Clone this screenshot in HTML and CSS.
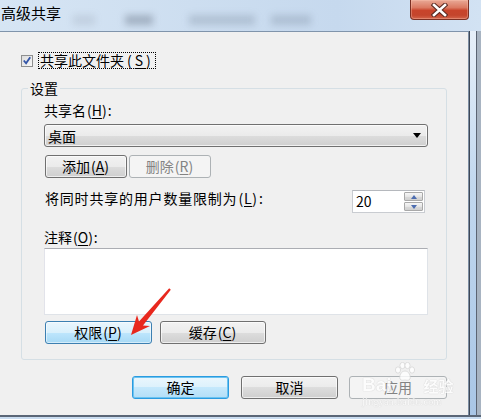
FILE: index.html
```html
<!DOCTYPE html>
<html lang="zh-CN">
<head>
<meta charset="utf-8">
<title>高级共享</title>
<link rel="stylesheet" href="styles.css">
</head>
<body>
<div class="window">
  <div class="titlebar">
    <span class="title">高级共享</span>
    <div class="blur-tabs">
      <span class="bt bt1"></span>
      <span class="bt bt2"></span>
      <span class="bt bt3"></span>
      <span class="bt bt4"></span>
    </div>
    <div class="close">
      <svg width="17" height="14" viewBox="0 0 17 14">
        <path d="M3 2 L14 12 M14 2 L3 12" stroke="#5a2a22" stroke-width="4.6" stroke-linecap="square"/>
        <path d="M3 2 L14 12 M14 2 L3 12" stroke="#ffffff" stroke-width="2.6" stroke-linecap="square"/>
      </svg>
    </div>
  </div>
  <div class="body-row">
    <div class="content">
      <div class="share-row">
        <span class="cb">
          <svg width="13" height="13" viewBox="0 0 13 13">
            <path d="M3 6.5 L5.5 9.5 L10 3" fill="none" stroke="#3355a8" stroke-width="2"/>
          </svg>
        </span>
        <span class="focus">共享此文件夹<span class="mn wide">(<u>S</u>)</span></span>
      </div>
      <fieldset class="group">
        <legend>设置</legend>
        <div class="group-body">
          <div class="lbl">共享名<span class="mn">(<u>H</u>)</span>:</div>
          <div class="combo"><span class="combo-text">桌面</span><span class="caret"></span></div>
          <div class="btn-row">
            <button class="btn w82">添加<span class="mn">(<u>A</u>)</span></button>
            <button class="btn w82 disabled">删除<span class="mn">(<u>R</u>)</span></button>
          </div>
          <div class="limit-row">
            <span class="limit-text">将同时共享的用户数量限制为<span class="mn">(<u>L</u>)</span>:</span>
            <div class="spin">
              <span class="spin-val">20</span>
              <div class="spin-btns">
                <span class="sb"><span class="tri-up"></span></span>
                <span class="sb"><span class="tri-down"></span></span>
              </div>
            </div>
          </div>
          <div class="lbl note-lbl">注释<span class="mn">(<u>O</u>)</span>:</div>
          <div class="textarea"></div>
          <div class="btn-row2">
            <button class="btn w107 hot">权限<span class="mn">(<u>P</u>)</span></button>
            <button class="btn w106">缓存<span class="mn">(<u>C</u>)</span></button>
          </div>
        </div>
      </fieldset>
      <div class="footer">
        <button class="btn w97 ok">确定</button>
        <button class="btn w97">取消</button>
        <button class="btn w98 disabled">应用</button>
      </div>
    </div>
    <div class="frame-right"></div>
  </div>
  <div class="frame-bottom"></div>
</div>
<svg class="red-arrow" width="481" height="419" viewBox="0 0 481 419">
  <polygon points="131,335 137,315 139,321.5 169.2,288.3 170.8,289.7 143,325.5 150,326" fill="#e8281e"/>
</svg>
<div class="watermark">
  <div class="wm-top">
    <span class="wm-bai">Bai</span>
    <svg class="paw" width="22" height="20" viewBox="0 0 22 20">
      <g fill="#ffffff" stroke="#cfcfcf" stroke-width="0.8">
        <ellipse cx="4" cy="8" rx="2.6" ry="3.2"/>
        <ellipse cx="8.5" cy="3.5" rx="2.6" ry="3.2"/>
        <ellipse cx="13.5" cy="3.5" rx="2.6" ry="3.2"/>
        <ellipse cx="18" cy="8" rx="2.6" ry="3.2"/>
        <path d="M11 9 C15 9 17 14 16 17 C15 19 12 18 11 18 C10 18 7 19 6 17 C5 14 7 9 11 9 Z"/>
      </g>
    </svg>
    <span class="wm-jy">经验</span>
  </div>
  <div class="wm-url">jingyan.baidu.com</div>
</div>
</body>
</html>
```
FILE: styles.css
```css
* { box-sizing: border-box; }
html, body { margin: 0; padding: 0; }
body {
  width: 481px;
  height: 419px;
  overflow: hidden;
  position: relative;
  font-family: "Noto Sans CJK SC", "Noto Sans", sans-serif;
  font-size: 14px;
  color: #000;
  background: #c6daef;
}
.window { display: flex; flex-direction: column; height: 419px; }

/* title bar */
.titlebar {
  height: 31px;
  flex: none;
  display: flex;
  align-items: flex-start;
  background: linear-gradient(to right, #d6e5f4 0%, #cddef0 40%, #c6d9ee 70%, #d2e2f3 100%);
  overflow: hidden;
}
.title {
  font-size: 15px;
  line-height: 16px;
  margin: 5px 0 0 1px;
  color: #000;
  position: relative;
  z-index: 1;
}
.blur-tabs {
  display: flex;
  align-items: center;
  height: 31px;
  margin-left: 8px;
  filter: blur(3.5px);
}
.bt { display: block; height: 10px; background: rgba(80, 95, 120, 0.22); margin-top: 8px; }
.bt1 { width: 22px; margin-left: 4px; background: rgba(90, 100, 120, 0.14); }
.bt2 { width: 28px; margin-left: 30px; background: rgba(60, 70, 90, 0.3); }
.bt3 { width: 66px; margin-left: 36px; }
.bt4 { width: 40px; margin-left: 16px; }
.close {
  margin-left: auto;
  margin-right: 12px;
  width: 59px;
  height: 20px;
  border: 1px solid #7b3023;
  border-top: none;
  border-radius: 0 0 4px 4px;
  background: linear-gradient(#e9a996 0%, #db7a62 40%, #c8442b 55%, #c4452c 80%, #d3654b 100%);
  display: flex;
  align-items: center;
  justify-content: center;
  box-shadow: inset 0 0 0 1px rgba(255, 200, 180, 0.35);
}

/* body */
.body-row { display: flex; height: 384px; flex: none; }
.content {
  width: 469px;
  height: 384px;
  background: #f0f0f0;
  border-top: 1px solid #8094ab;
  border-right: 1px solid #7d8ea3;
  display: flex;
  flex-direction: column;
}
.frame-right {
  flex: 1;
  background:
    linear-gradient(to right, #3e4857 0 1px, transparent 1px 7px, #5b6473 7px 8px, #a8b4c2 8px),
    linear-gradient(#e7f0fa, #c2d8ef 40%, #a9c6e6);
}
.frame-bottom {
  height: 4px;
  flex: none;
  border-top: 2px solid #5a6676;
  background: #c9dcf0;
}

/* share row */
.share-row {
  display: flex;
  align-items: center;
  height: 17px;
  margin-top: 20px;
  padding-left: 21px;
}
.cb {
  width: 12px;
  height: 12px;
  border: 1px solid #8e8f8f;
  background: linear-gradient(135deg, #dcdcdc, #f8f8f8);
  display: flex;
  align-items: center;
  justify-content: center;
  margin-right: 6px;
}
.cb svg { display: block; margin: -1px; }
.focus {
  outline: 1px dotted #000;
  outline-offset: 0;
  line-height: 15px;
  padding: 0 1px;
}
.mn { letter-spacing: 0; padding: 0 1px; }
.mn.wide { letter-spacing: 3px; padding: 0 0 0 3px; }
.mn u { text-underline-offset: 2px; }

/* group box */
.group {
  margin: 11px 21px 0 21px;
  padding: 0;
  border: 1px solid #d5dfe5;
  border-radius: 3px;
  min-width: 0;
}
.group legend {
  margin-left: 6px;
  padding: 0 2px;
  line-height: 16px;
  font-size: 14px;
}
.group-body {
  display: flex;
  flex-direction: column;
  padding: 0 18px 15px 22px;
}
.lbl { line-height: 16px; margin-top: 6px; }
.combo {
  margin-top: 6px;
  height: 23px;
  border: 1px solid #707070;
  border-radius: 3px;
  background: linear-gradient(#f2f2f2, #ebebeb 50%, #dddddd 50%, #cfcfcf);
  display: flex;
  align-items: center;
  padding: 0 6px 0 3px;
  box-shadow: inset 0 0 0 1px rgba(255, 255, 255, 0.7);
}
.combo-text { line-height: 16px; }
.caret {
  margin-left: auto;
  width: 0;
  height: 0;
  border-left: 4.5px solid transparent;
  border-right: 4.5px solid transparent;
  border-top: 5px solid #000;
}
.btn-row { display: flex; gap: 2px; margin-top: 8px; padding-left: 1px; }
.btn {
  height: 23px;
  border: 1px solid #707070;
  border-radius: 3px;
  background: linear-gradient(#f2f2f2, #ebebeb 50%, #dddddd 50%, #cfcfcf);
  box-shadow: inset 0 0 0 1px rgba(255, 255, 255, 0.65);
  font-family: inherit;
  font-size: 14px;
  line-height: 19px;
  color: #000;
  padding: 0;
  margin: 0;
  display: flex;
  align-items: center;
  justify-content: center;
}
.btn.hot {
  border-color: #3c7fb1;
  background: linear-gradient(#eaf6fd, #d9f0fc 50%, #bee6fd 50%, #a7d9f5);
  box-shadow: inset 0 0 0 1px rgba(255, 255, 255, 0.5);
}
.btn.ok {
  border-color: #2a9be0;
  background: linear-gradient(#eaf6fd, #dcf1fc 50%, #c4e8fc 50%, #b3def7);
  box-shadow: inset 0 0 0 1px #6cc3f0;
}
.btn.disabled {
  border-color: #adb2b5;
  background: #f4f4f4;
  box-shadow: none;
  color: #838383;
}
.w82 { width: 82px; }
.w97 { width: 97px; }
.w98 { width: 98px; }
.w106 { width: 106px; }
.w107 { width: 107px; }

.limit-row {
  display: flex;
  align-items: flex-start;
  margin-top: 12px;
  height: 23px;
  padding-left: 1px;
}
.limit-text { line-height: 16px; letter-spacing: 0.8px; }
.limit-text .mn { letter-spacing: 0.8px; }
.spin {
  margin-left: auto;
  margin-right: 3px;
  width: 73px;
  height: 23px;
  background: #fff;
  border: 1px solid #c9ccd1;
  border-top-color: #b5b8bd;
  display: flex;
  align-items: stretch;
}
.spin-val {
  flex: 1;
  padding-left: 3px;
  line-height: 21px;
  font-size: 14px;
}
.spin-btns {
  width: 20px;
  display: flex;
  flex-direction: column;
  gap: 1px;
  padding: 1px 1px 1px 0;
}
.sb {
  flex: 1;
  border: 1px solid #a9a9a9;
  border-radius: 1px;
  background: linear-gradient(#f6f6f6, #e6e6e6 50%, #dadada 50%, #d0d0d0);
  display: flex;
  align-items: center;
  justify-content: center;
}
.tri-up, .tri-down { width: 0; height: 0; border-left: 3.5px solid transparent; border-right: 3.5px solid transparent; }
.tri-up { border-bottom: 4px solid #4d6db0; }
.tri-down { border-top: 4px solid #4d6db0; }

.note-lbl { margin-top: 16px; }
.textarea {
  margin-top: 3px;
  height: 67px;
  background: #fff;
  border: 1px solid #dfe3e8;
  border-top-color: #abadb3;
  border-left-color: #e2e3ea;
}
.btn-row2 { display: flex; gap: 8px; margin-top: 6px; padding-left: 1px; }

.footer {
  display: flex;
  justify-content: flex-end;
  gap: 11px;
  margin-top: 16px;
  padding-right: 21px;
}
.footer .w97 + .w97 { margin-left: 1px; }

/* overlays */
.red-arrow { position: absolute; left: 0; top: 0; pointer-events: none; }
.watermark {
  position: absolute;
  left: 362px;
  top: 361px;
  color: #ffffff;
  text-shadow: 0 0 1px #c4c4c4, 0 0 1px #cfcfcf;
  opacity: 0.8;
  pointer-events: none;
}
.wm-top { display: flex; align-items: flex-end; height: 33px; }
.wm-bai { font-family: "Liberation Sans", sans-serif; font-size: 19px; line-height: 19px; font-weight: bold; }
.paw { margin: 0 8px 12px 2px; }
.wm-jy { font-size: 15px; line-height: 17px; font-weight: bold; }
.wm-url { font-family: "Liberation Serif", serif; font-size: 10px; line-height: 12px; margin-top: 2px; letter-spacing: 0.3px; }
```
